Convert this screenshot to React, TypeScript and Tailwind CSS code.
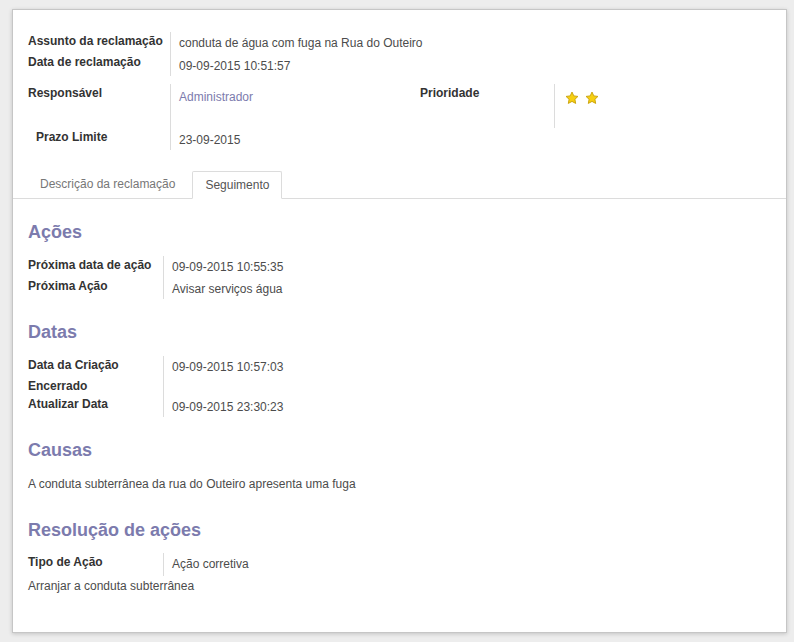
import React from "react";

const Star = () => (
  <svg width="14" height="14" viewBox="0 0 24 24" className="block">
    <path
      d="M12 1.8l3.1 6.6 7.1.9-5.2 4.9 1.3 7.1L12 17.8l-6.3 3.5 1.3-7.1-5.2-4.9 7.1-.9z"
      fill="#f6cf12"
      stroke="#c9a10a"
      strokeWidth="1.6"
      strokeLinejoin="round"
    />
  </svg>
);

type Row = { label: string; value?: React.ReactNode; h: string; lp?: string; vp?: string };

const Group: React.FC<{ rows: Row[]; labelW: string }> = ({ rows, labelW }) => (
  <div className="flex">
    <div className={`${labelW} shrink-0`}>
      {rows.map((r, i) => (
        <div key={i} className={`${r.h} ${r.lp ?? "pt-[2px]"} leading-[14px] font-bold text-[#333] whitespace-nowrap`}>
          {r.label}
        </div>
      ))}
    </div>
    <div className="border-l border-[#dcdcdc] pl-2">
      {rows.map((r, i) => (
        <div key={i} className={`${r.h} ${r.vp ?? "pt-[4px]"} leading-[14px] text-[#4c4c4c] whitespace-nowrap`}>
          {r.value}
        </div>
      ))}
    </div>
  </div>
);

const Heading: React.FC<{ children: React.ReactNode; className?: string }> = ({ children, className }) => (
  <h2 className={`text-[18px] leading-[22px] font-bold text-[#7c7bad] ${className ?? ""}`}>{children}</h2>
);

export default function App() {
  return (
    <div
      className="w-[794px] h-[642px] bg-[#ededed] pt-[9px] pl-[12px] text-[12px]"
      style={{ fontFamily: '"Liberation Sans", Arial, sans-serif' }}
    >
      <div className="w-[775px] h-[624px] bg-white border border-[#c6c6c6] shadow-[0_1px_4px_rgba(0,0,0,0.18)]">
        <div className="pl-[15px] pt-[22px]">
          <Group
            labelW="w-[142px]"
            rows={[
              { label: "Assunto da reclamação", value: "conduta de água com fuga na Rua do Outeiro", h: "h-[22px]" },
              { label: "Data de reclamação", value: "09-09-2015 10:51:57", h: "h-[22px]", lp: "pt-[1px]", vp: "pt-[5px]" },
            ]}
          />
          <div className="flex mt-[8px]">
            <div className="w-[392px] shrink-0">
              <Group
                labelW="w-[142px]"
                rows={[
                  {
                    label: "Responsável",
                    value: <span className="text-[#7c7bad]">Administrador</span>,
                    h: "h-[44px]",
                    lp: "pt-[2px]",
                    vp: "pt-[6px]",
                  },
                  { label: "", value: "23-09-2015", h: "h-[22px]", vp: "pt-[5px]" },
                ]}
              />
            </div>
            <div className="flex h-[44px]">
              <div className="w-[134px] shrink-0 pt-[2px] leading-[14px] font-bold text-[#333]">Prioridade</div>
              <div className="border-l border-[#dcdcdc] pl-[10px] pt-[7px] flex gap-[6px]">
                <Star />
                <Star />
              </div>
            </div>
          </div>
          <div className="-mt-[22px] h-[22px] pl-[8px] pt-[2px] leading-[14px] font-bold text-[#333] w-[142px]">
            Prazo Limite
          </div>
        </div>

        <div className="mt-[21px] border-b border-[#dcdcdc] pl-[15px] flex items-end h-[28px] gap-[5px]">
          <div className="h-[27px] px-3 leading-[27px] text-[#777]">Descrição da reclamação</div>
          <div className="h-[28px] px-3 leading-[27px] text-[#555] bg-white border border-[#dcdcdc] border-b-white -mb-px rounded-t-[2px]">
            Seguimento
          </div>
        </div>

        <div className="pl-[15px]">
          <Heading className="mt-[22px]">Ações</Heading>
          <div className="mt-[13px]">
            <Group
              labelW="w-[135px]"
              rows={[
                { label: "Próxima data de ação", value: "09-09-2015 10:55:35", h: "h-[22px]" },
                { label: "Próxima Ação", value: "Avisar serviços água", h: "h-[21px]", lp: "pt-[1px]", vp: "pt-[4px]" },
              ]}
            />
          </div>

          <Heading className="mt-[22px]">Datas</Heading>
          <div className="mt-[13px]">
            <Group
              labelW="w-[135px]"
              rows={[
                { label: "Data da Criação", value: "09-09-2015 10:57:03", h: "h-[22px]" },
                { label: "Encerrado", value: "", h: "h-[18px]", lp: "pt-[1px]" },
                { label: "Atualizar Data", value: "09-09-2015 23:30:23", h: "h-[21px]", lp: "pt-[1px]", vp: "pt-[4px]" },
              ]}
            />
          </div>

          <Heading className="mt-[22px]">Causas</Heading>
          <p className="mt-[15px] leading-[16px] text-[#4c4c4c]">A conduta subterrânea da rua do Outeiro apresenta uma fuga</p>

          <Heading className="mt-[27px]">Resolução de ações</Heading>
          <div className="mt-[12px]">
            <Group
              labelW="w-[135px]"
              rows={[{ label: "Tipo de Ação", value: "Ação corretiva", h: "h-[23px]" }]}
            />
          </div>
          <p className="mt-[2px] leading-[16px] text-[#4c4c4c]">Arranjar a conduta subterrânea</p>
        </div>
      </div>
    </div>
  );
}
